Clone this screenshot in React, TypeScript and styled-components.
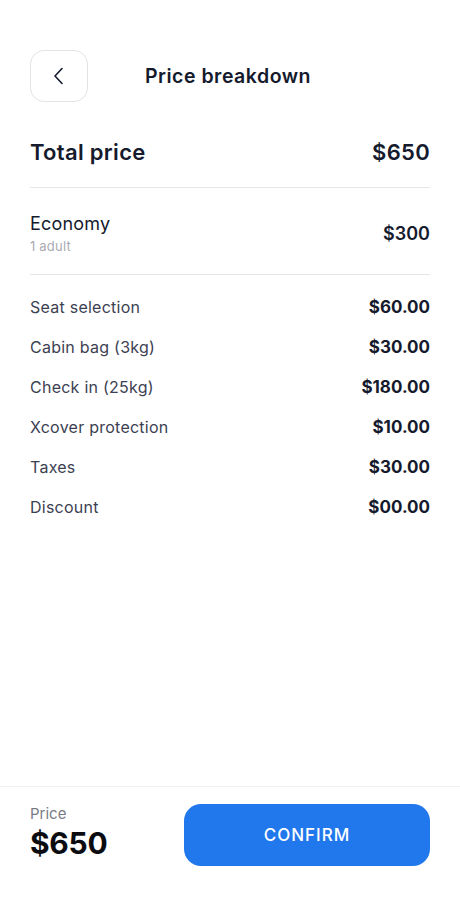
import styled, {createGlobalStyle} from 'styled-components';

const Global = createGlobalStyle`
  html, body {
    margin: 0;
    padding: 0;
    background: #ffffff;
  }
  body {
    font-family: Inter, "Noto Sans", sans-serif;
    color: #151a2d;
  }`

const Screen = styled.div`
  width: 460px;
  height: 900px;
  display: flex;
  flex-direction: column;
  background: #fff;`

const Content = styled.div`
  flex: 1;
  padding: 50px 30px 0 30px;
  display: flex;
  flex-direction: column;`

const Header = styled.div`
  display: flex;
  align-items: center;
  height: 52px;`

const BackButton = styled.button`
  width: 58px;
  height: 52px;
  box-sizing: border-box;
  border: 1px solid #e3e3e6;
  border-radius: 14px;
  background: #fff;
  display: flex;
  align-items: center;
  justify-content: center;
  padding: 0;
  cursor: pointer;`

const Title = styled.h1`
  margin: 0 0 0 57px;
  font-size: 19.5px;
  font-weight: 600;
  letter-spacing: 0.5px;
  color: #151a2d;`

const TotalRow = styled.div`
  display: flex;
  justify-content: space-between;
  align-items: center;
  margin-top: 35px;
  height: 30px;
  font-size: 22px;
  font-weight: 600;
  letter-spacing: 0.3px;
  color: #151a2d;`

const Divider = styled.div`
  height: 1px;
  background: #e6e6ea;
  margin: ${(p: {$top: number}) => p.$top}px 0 0 0;`

const FareRow = styled.div`
  display: flex;
  justify-content: space-between;
  align-items: center;
  margin-top: 24px;`

const FareName = styled.div`
  font-size: 18px;
  font-weight: 400;
  letter-spacing: 0.2px;
  color: #151a2d;
  line-height: 24px;`

const FareSub = styled.div`
  font-size: 13px;
  color: #a9abb3;
  margin-top: 1px;
  line-height: 18px;
  letter-spacing: 0.2px;`

const FareAmount = styled.div`
  font-size: 18px;
  font-weight: 600;
  color: #151a2d;
  margin-top: 0;`

const Items = styled.div`
  display: flex;
  flex-direction: column;
  margin-top: 12px;`

const ItemRow = styled.div`
  display: flex;
  justify-content: space-between;
  align-items: center;
  height: 40px;`

const ItemLabel = styled.span`
  font-size: 16px;
  font-weight: 400;
  letter-spacing: 0.25px;
  color: #3c4152;`

const ItemValue = styled.span`
  font-size: 17px;
  font-weight: 700;
  color: #151a2d;`

const Footer = styled.div`
  border-top: 1px solid #f0f0f2;
  height: 114px;
  box-sizing: border-box;
  padding: 17px 30px 0 30px;
  display: flex;
  justify-content: space-between;
  align-items: flex-start;`

const PriceBlock = styled.div`
  display: flex;
  flex-direction: column;
  padding-top: 0;`

const PriceLabel = styled.span`
  font-size: 15px;
  color: #7a7c84;
  line-height: 20px;`

const PriceValue = styled.span`
  font-size: 30px;
  font-weight: 700;
  color: #0b0c10;
  line-height: 38px;
  letter-spacing: -0.3px;`

const ConfirmButton = styled.button`
  width: 246px;
  height: 62px;
  border: none;
  border-radius: 17px;
  background: #2177ec;
  color: #fff;
  font-family: Inter, "Noto Sans", sans-serif;
  font-size: 17px;
  font-weight: 500;
  letter-spacing: 1px;
  cursor: pointer;`

const items = [
  ['Seat selection', '$60.00'],
  ['Cabin bag (3kg)', '$30.00'],
  ['Check in (25kg)', '$180.00'],
  ['Xcover protection', '$10.00'],
  ['Taxes', '$30.00'],
  ['Discount', '$00.00'],
]

const App = () => {
  return (
    <Screen>
      <Global/>
      <Content>
        <Header>
          <BackButton aria-label="Back">
            <svg width="12" height="18" viewBox="0 0 12 18" fill="none">
              <path d="M9 1.5L2 9l7 7.5" stroke="#151a2d" strokeWidth="1.6" strokeLinecap="round" strokeLinejoin="round"/>
            </svg>
          </BackButton>
          <Title>Price breakdown</Title>
        </Header>
        <TotalRow>
          <span>Total price</span>
          <span>$650</span>
        </TotalRow>
        <Divider $top={20}/>
        <FareRow>
          <div>
            <FareName>Economy</FareName>
            <FareSub>1 adult</FareSub>
          </div>
          <FareAmount>$300</FareAmount>
        </FareRow>
        <Divider $top={19}/>
        <Items>
          {items.map(([label, value]) => (
            <ItemRow key={label}>
              <ItemLabel>{label}</ItemLabel>
              <ItemValue>{value}</ItemValue>
            </ItemRow>
          ))}
        </Items>
      </Content>
      <Footer>
        <PriceBlock>
          <PriceLabel>Price</PriceLabel>
          <PriceValue>$650</PriceValue>
        </PriceBlock>
        <ConfirmButton>CONFIRM</ConfirmButton>
      </Footer>
    </Screen>
  );
}

export default App
